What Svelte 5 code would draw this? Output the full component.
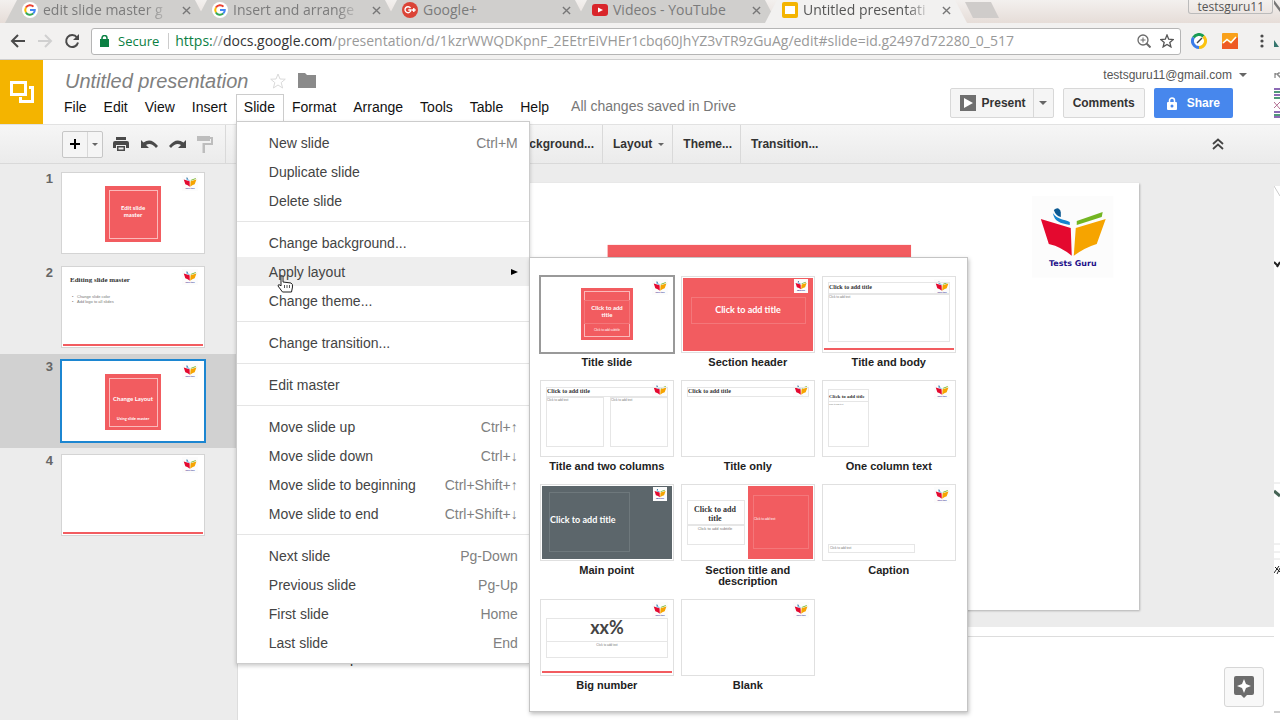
<script lang="ts">
    type Box = { x: number; y: number; w: number; h: number; fill?: string; stroke?: string };
    type Label = { x: number; y: number; size: number; text: string; font?: string; fill?: string; center?: boolean };
    type Preview = { boxes?: Box[]; labels?: Label[]; framed?: boolean };

    const red = '#f25c60';
    const line = '#e6e6e6';
    const faint = '#f4777a';
    const pale = '#fbb9ba';
    const grey = '#777';

    const tabs = [
        { icon: 'google', title: 'edit slide master g', fade: true },
        { icon: 'google', title: 'Insert and arrange', fade: true },
        { icon: 'plus', title: 'Google+', fade: false },
        { icon: 'youtube', title: 'Videos - YouTube', fade: false },
        { icon: 'slides', title: 'Untitled presentati', fade: true },
    ];

    const menus = ['File', 'Edit', 'View', 'Insert', 'Slide', 'Format', 'Arrange', 'Tools', 'Table', 'Help'];

    const slideMenu = [
        [
            { text: 'New slide', keys: 'Ctrl+M' },
            { text: 'Duplicate slide', keys: '' },
            { text: 'Delete slide', keys: '' },
        ],
        [
            { text: 'Change background...', keys: '' },
            { text: 'Apply layout', keys: '' },
            { text: 'Change theme...', keys: '' },
        ],
        [{ text: 'Change transition...', keys: '' }],
        [{ text: 'Edit master', keys: '' }],
        [
            { text: 'Move slide up', keys: 'Ctrl+↑' },
            { text: 'Move slide down', keys: 'Ctrl+↓' },
            { text: 'Move slide to beginning', keys: 'Ctrl+Shift+↑' },
            { text: 'Move slide to end', keys: 'Ctrl+Shift+↓' },
        ],
        [
            { text: 'Next slide', keys: 'Pg-Down' },
            { text: 'Previous slide', keys: 'Pg-Up' },
            { text: 'First slide', keys: 'Home' },
            { text: 'Last slide', keys: 'End' },
        ],
    ];

    const slides: Preview[] = [
        {
            boxes: [
                { x: 43, y: 13, w: 56, h: 56, fill: red },
                { x: 47, y: 17, w: 48, h: 48, stroke: pale },
            ],
            labels: [
                { x: 71, y: 35, size: 6, text: 'Edit slide', fill: '#fff', center: true },
                { x: 71, y: 42, size: 6, text: 'master', fill: '#fff', center: true },
            ],
        },
        {
            boxes: [{ x: 1, y: 77, w: 140, h: 2, fill: red }],
            labels: [
                { x: 8, y: 13, size: 7, text: 'Editing slide master', font: 'serif' },
                { x: 10, y: 30, size: 4, text: '•', font: 'plain', fill: grey },
                { x: 15, y: 30, size: 4, text: 'Change slide color', font: 'plain', fill: grey },
                { x: 10, y: 35, size: 4, text: '•', font: 'plain', fill: grey },
                { x: 15, y: 35, size: 4, text: 'Add logo to all slides', font: 'plain', fill: grey },
            ],
        },
        {
            boxes: [
                { x: 43, y: 13, w: 56, h: 56, fill: red },
                { x: 47, y: 17, w: 48, h: 48, stroke: pale },
            ],
            labels: [
                { x: 71, y: 38, size: 6, text: 'Change Layout', fill: '#fff', center: true },
                { x: 71, y: 58, size: 4, text: 'Using slide master', fill: '#fff', center: true },
            ],
        },
        { boxes: [{ x: 1, y: 77, w: 140, h: 2, fill: red }] },
    ];

    const layouts: (Preview & { name: string })[] = [
        {
            name: 'Title slide',
            boxes: [
                { x: 40, y: 11, w: 52, h: 52, fill: red },
                { x: 43, y: 14, w: 45, h: 45, stroke: pale },
                { x: 43, y: 23, w: 45, h: 23, stroke: faint },
            ],
            labels: [
                { x: 66, y: 31, size: 6, text: 'Click to add', fill: '#fff', center: true },
                { x: 66, y: 38, size: 6, text: 'title', fill: '#fff', center: true },
                { x: 66, y: 53, size: 3, text: 'Click to add subtitle', font: 'plain', fill: '#fff', center: true },
            ],
        },
        {
            name: 'Section header',
            framed: true,
            boxes: [
                { x: 1, y: 1, w: 130, h: 73, fill: red },
                { x: 9, y: 20, w: 114, h: 26, stroke: faint },
            ],
            labels: [{ x: 66, y: 34, size: 9, text: 'Click to add title', fill: '#fff', center: true }],
        },
        {
            name: 'Title and body',
            boxes: [
                { x: 5, y: 5, w: 121, h: 11, stroke: line },
                { x: 5, y: 17, w: 121, h: 47, stroke: line },
                { x: 1, y: 71, w: 130, h: 2, fill: red },
            ],
            labels: [
                { x: 6, y: 11, size: 6, text: 'Click to add title', font: 'serif' },
                { x: 6, y: 20, size: 3, text: 'Click to add text', font: 'plain', fill: grey },
            ],
        },
        {
            name: 'Title and two columns',
            boxes: [
                { x: 5, y: 6, w: 121, h: 9, stroke: line },
                { x: 5, y: 16, w: 57, h: 49, stroke: line },
                { x: 69, y: 16, w: 57, h: 49, stroke: line },
            ],
            labels: [
                { x: 6, y: 11, size: 6, text: 'Click to add title', font: 'serif' },
                { x: 6, y: 19, size: 3, text: 'Click to add text', font: 'plain', fill: grey },
                { x: 70, y: 19, size: 3, text: 'Click to add text', font: 'plain', fill: grey },
            ],
        },
        {
            name: 'Title only',
            boxes: [{ x: 5, y: 6, w: 121, h: 9, stroke: line }],
            labels: [{ x: 6, y: 11, size: 6, text: 'Click to add title', font: 'serif' }],
        },
        {
            name: 'One column text',
            boxes: [
                { x: 5, y: 8, w: 40, h: 12, stroke: line },
                { x: 5, y: 20, w: 40, h: 45, stroke: line },
            ],
            labels: [
                { x: 6, y: 16, size: 5, text: 'Click to add title', font: 'serif' },
                { x: 6, y: 23, size: 2, text: 'Click to add text', font: 'plain', fill: grey },
            ],
        },
        {
            name: 'Main point',
            framed: true,
            boxes: [
                { x: 1, y: 1, w: 130, h: 73, fill: '#5c666b' },
                { x: 8, y: 7, w: 80, h: 59, stroke: '#6e787c' },
            ],
            labels: [{ x: 9, y: 36, size: 9, text: 'Click to add title', fill: '#fff' }],
        },
        {
            name: 'Section title and description',
            boxes: [
                { x: 5, y: 15, w: 57, h: 24, stroke: line },
                { x: 5, y: 40, w: 57, h: 19, stroke: line },
                { x: 66, y: 1, w: 65, h: 73, fill: red },
                { x: 71, y: 10, w: 55, h: 53, stroke: faint },
            ],
            labels: [
                { x: 33, y: 25, size: 8, text: 'Click to add', font: 'serif', center: true },
                { x: 33, y: 34, size: 8, text: 'title', font: 'serif', center: true },
                { x: 33, y: 44, size: 4, text: 'Click to add subtitle', font: 'plain', fill: grey, center: true },
                { x: 72, y: 34, size: 3, text: 'Click to add text', font: 'plain', fill: '#fff' },
            ],
        },
        {
            name: 'Caption',
            boxes: [{ x: 5, y: 59, w: 86, h: 8, stroke: line }],
            labels: [{ x: 7, y: 63, size: 3, text: 'Click to add text', font: 'plain', fill: grey }],
        },
        {
            name: 'Big number',
            boxes: [
                { x: 5, y: 18, w: 121, h: 23, stroke: line },
                { x: 5, y: 41, w: 121, h: 16, stroke: line },
                { x: 1, y: 71, w: 130, h: 2, fill: red },
            ],
            labels: [
                { x: 66, y: 29, size: 18, text: 'xx%', fill: '#444', center: true },
                { x: 66, y: 45, size: 3, text: 'Click to add text', font: 'plain', fill: grey, center: true },
            ],
        },
        { name: 'Blank' },
    ];

    let activeSlide = $state(2);
    let activeLayout = $state(0);
    let address = 'presentation/d/1kzrWWQDKpnF_2EEtrEiVHEr1cbq60JhYZ3vTR9zGuAg/edit#slide=id.g2497d72280_0_517';
</script>

{#snippet logo(x: number, y: number, size: number)}
    <svg {x} {y} width={size} height={size} viewBox="0 0 82 82">
        <rect width="82" height="82" fill="#fcfcfc" />
        <path d="M9 23 39 32 40 60Q30 51 17 48Z" fill="#e4092f" />
        <path d="M74 23 44 32 42 60Q52 52 65 48Z" fill="#f6a400" />
        <path d="M21 17C26 24 32 23 38 26V29C28 27 23 26 21 17Z" fill="#1685cf" />
        <path d="M22 14Q27 10 29 16V21Q24 20 22 14Z" fill="#0d5a92" />
        <path d="M45 25 71 16 70 21 45 29Z" fill="#73b522" />
        <text x="41" y="70" text-anchor="middle" class="logo-text">Tests Guru</text>
    </svg>
{/snippet}

{#snippet preview(item: Preview, width: number, height: number)}
    <svg class="preview" viewBox="0 0 {width} {height}" aria-hidden="true">
        <rect {width} {height} fill="#fff" />
        {#if !item.framed}
            {@render logo(width === 132 ? 111 : 120, 2, 16)}
        {/if}
        {#each item.boxes ?? [] as box}
            {#if box.fill}
                <rect x={box.x} y={box.y} width={box.w} height={box.h} fill={box.fill} />
            {:else}
                <rect x={box.x + 0.5} y={box.y + 0.5} width={box.w} height={box.h} fill="none" stroke={box.stroke} />
            {/if}
        {/each}
        {#if item.framed}
            {@render logo(112, 2, 14)}
        {/if}
        {#each item.labels ?? [] as label}
            <text
                x={label.x}
                y={label.y}
                class={label.font ?? 'sans'}
                font-size={label.size}
                fill={label.fill ?? '#333'}
                text-anchor={label.center ? 'middle' : 'start'}
                dominant-baseline="middle">{label.text}</text>
        {/each}
    </svg>
{/snippet}

{#snippet favicon(name: string)}
    <svg class="favicon" viewBox="0 0 16 16" aria-hidden="true">
        {#if name === 'google'}
            <circle cx="8" cy="8" r="8" fill="#fff" />
            <g fill="none" stroke-width="2">
                <path d="M11.500 4.600A4.800 4.800 0 0 0 3.900 5.600" stroke="#ea4335" />
                <path d="M3.900 5.600A4.800 4.800 0 0 0 3.900 10.400" stroke="#fbbc05" />
                <path d="M3.900 10.400A4.800 4.800 0 0 0 11.200 11.600" stroke="#34a853" />
                <path d="M11.200 11.600A4.800 4.800 0 0 0 12.800 8H8" stroke="#4285f4" />
            </g>
        {:else if name === 'plus'}
            <circle cx="8" cy="8" r="8" fill="#db4437" />
            <path d="M8.500 6A3 3 0 1 0 9 8H6.300M11.800 6V10M9.900 8H13.700" fill="none" stroke="#fff" stroke-width="1.400" />
        {:else if name === 'youtube'}
            <rect y="2" width="16" height="12" rx="3" fill="#d9252a" />
            <path d="M6 5.500 11 8 6 10.500Z" fill="#fff" />
        {:else}
            <rect width="16" height="16" rx="2" fill="#f4b400" />
            <path d="M3 4H13V12H3Z" fill="#fff" />
        {/if}
    </svg>
{/snippet}

<div class="window">
    <div class="tab-strip">
        {#each tabs as tab, i}
            <div class="tab" class:current={i === 4}>
                {@render favicon(tab.icon)}
                <span class="tab-title" class:fade={tab.fade}>{tab.title}</span>
                <button class="close" aria-label="Close tab">
                    <svg width="9" height="9" viewBox="0 0 10 10"><path d="M1 1 9 9M9 1 1 9" stroke="currentColor" stroke-width="1.500" /></svg>
                </button>
            </div>
        {/each}
        <button class="new-tab" aria-label="New tab"></button>
        <span class="profile">testsguru11</span>
    </div>

    <div class="browser-bar">
        <button class="nav" aria-label="Back">
            <svg width="16" height="16" viewBox="0 0 16 16"><path d="M15 8H2M8 2 2 8 8 14" fill="none" stroke="#4a4a4a" stroke-width="2" /></svg>
        </button>
        <button class="nav" aria-label="Forward">
            <svg width="16" height="16" viewBox="0 0 16 16"><path d="M1 8H14M8 2 14 8 8 14" fill="none" stroke="#d0d0d0" stroke-width="2" /></svg>
        </button>
        <button class="nav" aria-label="Reload">
            <svg width="16" height="16" viewBox="0 0 16 16"><path d="M13 4.500A6 6 0 1 0 14 9.500" fill="none" stroke="#4a4a4a" stroke-width="2" /><path d="M15 1V7H9Z" fill="#4a4a4a" /></svg>
        </button>
        <div class="address">
            <svg width="9" height="12" viewBox="0 0 9 12"><rect y="4" width="9" height="8" fill="#0b8043" /><path d="M2 5V3A2.500 2.500 0 0 1 7 3V5" fill="none" stroke="#0b8043" stroke-width="1.500" /></svg>
            <span class="secure">Secure</span>
            <span class="url"><span class="secure">https:</span>//<b>docs.google.com</b>/{address}</span>
            <button aria-label="Zoom">
                <svg width="14" height="14" viewBox="0 0 14 14" fill="none" stroke="#6b6b6b"><circle cx="6" cy="6" r="5" stroke-width="1.300" /><path d="M9.500 9.500 13.500 13.500" stroke-width="2" /><path d="M3.500 6H8.500M6 3.500V8.500" /></svg>
            </button>
            <button aria-label="Bookmark this page">
                <svg width="14" height="14" viewBox="0 0 14 14"><path d="M7 1 8.700 5.200 13.300 5.500 9.800 8.400 10.900 12.900 7 10.400 3.100 12.900 4.200 8.400 .7 5.500 5.300 5.200Z" fill="none" stroke="#555" stroke-width="1.300" /></svg>
            </button>
        </div>
        <div class="extensions">
            <button aria-label="Page speed">
                <svg width="16" height="16" viewBox="0 0 16 16" fill="none" stroke-width="3"><circle cx="8" cy="8" r="5" fill="#fff" stroke="none" /><path d="M2.500 4.500A6.500 6.500 0 0 1 12.500 3.300" stroke="#1a9c55" /><path d="M12.500 3.300A6.500 6.500 0 0 1 8 14.500" stroke="#fbc311" /><path d="M8 14.500A6.500 6.500 0 0 1 2.500 4.500" stroke="#3b7de9" /><path d="M6 10 11 5" stroke="#444" stroke-width="1.500" /></svg>
            </button>
            <button aria-label="Analytics">
                <svg width="16" height="16" viewBox="0 0 16 16"><rect width="16" height="16" rx="1" fill="#f9a11b" /><path d="M0 11 5 8 9 11 15 4 16 5V16H0Z" fill="#ee5a24" /><path d="M1 10 5 6.500 9 9.500 14 4" fill="none" stroke="#fff" stroke-width="1.500" /></svg>
            </button>
        </div>
        <button aria-label="Browser menu">
            <svg width="4" height="14" viewBox="0 0 4 14" fill="#4a4a4a"><circle cx="2" cy="2" r="1.600" /><circle cx="2" cy="7" r="1.600" /><circle cx="2" cy="12" r="1.600" /></svg>
        </button>
    </div>

    <header>
        <a class="home" href="#home" aria-label="Slides home">
            <svg width="26" height="24" viewBox="0 0 26 24" fill="none" stroke="#fff" stroke-width="3"><path d="M2.500 2.500H16.500V14.500H2.500Z" /><path d="M20 7.500H23.500V21.500H11.500V17" /></svg>
        </a>
        <div class="document">
            <div class="title-row">
                <h1>Untitled presentation</h1>
                <button class="title-icon" aria-label="Star">
                    <svg width="16" height="16" viewBox="0 0 16 16"><path d="M8 1 10 6 15.300 6.200 11.200 9.600 12.600 15 8 12 3.400 15 4.800 9.600 .7 6.200 6 6Z" fill="none" stroke="#dadada" /></svg>
                </button>
                <button class="title-icon" aria-label="Move to folder">
                    <svg width="18" height="15" viewBox="0 0 18 15"><path d="M0 0H7L9 2H18V15H0Z" fill="#8a8a8a" /></svg>
                </button>
            </div>
            <nav>
                {#each menus as menu}
                    <div class="menu-holder">
                        <button class="menu" class:open={menu === 'Slide'}>{menu}</button>
                        {#if menu === 'Slide'}
                            <div class="dropdown">
                                {#each slideMenu as group}
                                    <div class="group">
                                        {#each group as item}
                                            <div class="entry">
                                                <button class="item" class:hover={item.text === 'Apply layout'}>
                                                    <span>{item.text}</span>
                                                    {#if item.text === 'Apply layout'}
                                                        <svg width="7" height="8" viewBox="0 0 7 8"><path d="M0 1 7 4 0 7Z" /></svg>
                                                    {:else}
                                                        <span class="keys">{item.keys}</span>
                                                    {/if}
                                                </button>
                                                {#if item.text === 'Apply layout'}
                                                    <svg class="pointer" width="17" height="18" viewBox="0 0 17 18"><path d="M4 1Q6 0 6 2V7L14 8Q16 9 15.500 12L14.500 17H5.500L1 11Q1 9 3 10L4 11Z" fill="#fff" stroke="#222" /><path d="M7.500 10V13M10 10V13M12.500 10V13" stroke="#555" /></svg>
                                                    <div class="layouts">
                                                        {#each layouts as layout, i}
                                                            <button class="layout" class:chosen={i === activeLayout} onclick={() => (activeLayout = i)}>
                                                                <span class="thumb">{@render preview(layout, 132, 75)}</span>
                                                                <span class="layout-name">{layout.name}</span>
                                                            </button>
                                                        {/each}
                                                    </div>
                                                {/if}
                                            </div>
                                        {/each}
                                    </div>
                                {/each}
                            </div>
                        {/if}
                    </div>
                {/each}
                <span class="saved">All changes saved in Drive</span>
            </nav>
        </div>
        <div class="account">
            <button class="email">testsguru11@gmail.com <i class="caret"></i></button>
            <div class="actions">
                <div class="split">
                    <button class="present">
                        <svg width="16" height="16" viewBox="0 0 16 16"><rect width="16" height="16" fill="#6f6f6f" /><path d="M4 3 13 8 4 13Z" fill="#fff" /></svg>
                        Present
                    </button>
                    <button class="more" aria-label="Present options"><i class="caret"></i></button>
                </div>
                <button class="comments">Comments</button>
                <button class="share">
                    <svg width="10" height="13" viewBox="0 0 10 13"><path d="M2.500 5V3.500A2.500 2.500 0 0 1 7.500 3.500V5" fill="none" stroke="#fff" stroke-width="1.500" /><rect y="5" width="10" height="8" rx="1" fill="#fff" /><circle cx="5" cy="9" r="1.500" fill="#4787ed" /></svg>
                    Share
                </button>
            </div>
        </div>
    </header>

    <div class="toolbar">
        <div class="split add">
            <button aria-label="New slide"><svg width="10" height="10" viewBox="0 0 10 10"><path d="M5 0V10M0 5H10" stroke="#000" stroke-width="2" /></svg></button>
            <button class="more" aria-label="New slide with layout"><i class="caret small"></i></button>
        </div>
        <button class="tool" aria-label="Print">
            <svg width="16" height="14" viewBox="0 0 16 14" fill="#4a4a4a"><rect x="3" width="10" height="3" /><path d="M2 4H14Q16 4 16 6V11H13V8H3V11H0V6Q0 4 2 4Z" /><path d="M4 9H12V14H4ZM5.500 10.500V12.500H10.500V10.500Z" fill-rule="evenodd" /></svg>
        </button>
        <button class="tool" aria-label="Undo">
            <svg width="17" height="9" viewBox="0 0 17 9"><path d="M0 0 2.500 2.500Q10-3 17 6L15 8Q10 2 5 5L8 8H0Z" fill="#4a4a4a" /></svg>
        </button>
        <button class="tool" aria-label="Redo">
            <svg width="17" height="9" viewBox="0 0 17 9"><path d="M17 0 14.500 2.500Q7-3 0 6L2 8Q7 2 12 5L9 8H17Z" fill="#4a4a4a" /></svg>
        </button>
        <button class="tool" aria-label="Paint format">
            <svg width="16" height="17" viewBox="0 0 16 17" fill="#bdbdbd"><rect width="13" height="5" /><path d="M13 1H16V9H8V17H5.500V7H14V3H13Z" /></svg>
        </button>
        <div class="covered"></div>
        <button class="command">Background...</button>
        <button class="command">Layout <i class="caret small"></i></button>
        <button class="command">Theme...</button>
        <button class="command">Transition...</button>
        <button class="collapse" aria-label="Hide the menus">
            <svg width="12" height="12" viewBox="0 0 12 12"><path d="M1 6 6 1.500 11 6M1 11 6 6.500 11 11" fill="none" stroke="#444" stroke-width="1.800" /></svg>
        </button>
    </div>

    <main>
        <aside>
            {#each slides as slide, i}
                <button class="slide-row" class:active={i === activeSlide} onclick={() => (activeSlide = i)}>
                    <span class="number">{i + 1}</span>
                    <span class="slide-thumb">{@render preview(slide, 142, 80)}</span>
                </button>
            {/each}
        </aside>
        <div class="editor">
            <div class="canvas">
                <div class="page">
                    <svg class="preview" viewBox="0 0 762 428" aria-hidden="true">
                        <rect x="229" y="62" width="304" height="304" fill={red} />
                        <rect x="250" y="83" width="262" height="262" fill="none" stroke={pale} stroke-width="2" />
                        {@render logo(654, 13, 82)}
                    </svg>
                </div>
            </div>
            <div class="divider"></div>
            <div class="notes">
                <p>Click to add speaker notes</p>
                <button class="explore" aria-label="Explore">
                    <svg width="20" height="22" viewBox="0 0 20 22"><path d="M2 0H18Q20 0 20 2V17Q20 19 18 19H13L10 22 7 19H2Q0 19 0 17V2Q0 0 2 0Z" fill="#6c6c6c" /><path d="M10 3 12 8 17 10 12 12 10 17 8 12 3 10 8 8Z" fill="#fff" /></svg>
                </button>
            </div>
        </div>
    </main>

    <!-- window lying behind, seen past the right edge -->
    <svg class="behind" width="6" height="720" viewBox="0 0 6 720" aria-hidden="true">
        <path d="M0 0 6 8V12L0 4Z" fill="#777" />
        <path d="M0 40 5 47H0Z" fill="#35756d" />
        <path d="M0 61H6V124H0ZM0 186H6V720H0Z" fill="#fff" />
        <path d="M0 186 6 196" stroke="#ccc" />
        <path d="M1 78V73M1 74H4M6 73H4V76H6V78" stroke="#666" fill="none" />
        <path d="M0 89H6M0 95H6M0 112H6M0 117H6" stroke="#8c6bb5" stroke-width="2" />
        <path d="M0 92H6M0 98H6M0 115H6" stroke="#4f9a78" stroke-width="2" />
        <path d="M0 102 6 109M0 108 6 102" stroke="#b36f91" />
        <path d="M0 262 4 266M6 262 3 267" stroke="#222" stroke-width="2" />
        <path d="M0 491 6 496" stroke="#466455" stroke-width="3" />
        <path d="M0 483H6M0 544H6M0 552H6M0 559H6" stroke="#e2e2e2" />
        <path d="M0 573 5 566M1 567 6 572M3 574 6 568" stroke="#222" />
        <path d="M0 712H6" stroke="#ccc" stroke-width="2" />
    </svg>
</div>

<style>
    :global(body) {
        margin: 0;
    }

    .window {
        position: relative;
        display: flex;
        flex-direction: column;
        height: 100vh;
        overflow: hidden;
        background: #fff;
        color: #333;
        font-family: "Liberation Sans", Arial, sans-serif;
        font-size: 14px;
    }

    button {
        display: flex;
        align-items: center;
        justify-content: center;
        margin: 0;
        padding: 0;
        border: none;
        background: none;
        color: inherit;
        font: inherit;
        cursor: pointer;
    }

    svg {
        display: block;
        flex: none;
    }

    /* browser */
    .tab-strip {
        display: flex;
        height: 23px;
        padding-left: 5px;
        box-sizing: border-box;
        background: linear-gradient(#f3f0ee, #e6ddd8);
        font-family: "Open Sans", "Noto Sans", sans-serif;
    }

    .tab {
        display: flex;
        align-items: center;
        width: 202px;
        height: 23px;
        margin-right: -12px;
        padding: 0 12px 3px 17px;
        box-sizing: border-box;
        background: #d0cfcd;
        clip-path: polygon(12px 0, calc(100% - 12px) 0, 100% 100%, 0 100%);
        color: #7b7b7b;
    }

    .tab.current {
        z-index: 1;
        background: #f2f1f0;
        color: #555;
    }

    .favicon {
        width: 16px;
        height: 16px;
        margin-right: 5px;
    }

    .tab-title {
        flex: 1;
        white-space: nowrap;
        font-size: 14px;
        line-height: 20px;
    }

    .tab-title.fade {
        mask-image: linear-gradient(90deg, #000 80%, transparent);
    }

    .close {
        width: 18px;
        margin-left: 5px;
        color: #777;
    }

    .new-tab {
        width: 34px;
        height: 16px;
        margin: 2px 0 0 10px;
        background: #cfccca;
        clip-path: polygon(0 0, 26px 0, 100% 100%, 8px 100%);
    }

    .profile {
        height: 14px;
        margin: 0 7px 0 auto;
        padding: 0 8px;
        border: 1px solid #bbb;
        border-top: none;
        border-radius: 0 0 3px 3px;
        box-sizing: border-box;
        color: #555;
        font-size: 12px;
        line-height: 14px;
    }

    .browser-bar {
        display: flex;
        align-items: center;
        height: 37px;
        padding: 0 16px 0 10px;
        box-sizing: border-box;
        border-bottom: 1px solid #cfcfcf;
        background: #f2f1f0;
        font-family: "Open Sans", "Noto Sans", sans-serif;
    }

    .nav {
        width: 16px;
        margin-right: 11px;
    }

    .address {
        display: flex;
        flex: 1;
        align-items: center;
        gap: 9px;
        height: 27px;
        padding: 0 6px 0 8px;
        box-sizing: border-box;
        border: 1px solid #b5b5b5;
        border-radius: 3px;
        background: #fff;
        color: #999;
        font-size: 13px;
    }

    .address .secure {
        color: #0b8043;
    }

    .url {
        flex: 1;
        padding-left: 6px;
        border-left: 1px solid #ccc;
        font-size: 14px;
        line-height: 16px;
        white-space: nowrap;
    }

    .url b {
        color: #333;
        font-weight: 400;
    }

    .extensions {
        display: flex;
        gap: 15px;
        margin: 0 22px 0 10px;
    }

    /* document header */
    header {
        display: flex;
        height: 64px;
    }

    .home {
        display: flex;
        align-items: center;
        justify-content: center;
        width: 43px;
        background: #f4b400;
    }

    .document {
        flex: 1;
        padding: 7px 0 0 13px;
    }

    .title-row {
        display: flex;
        align-items: center;
        height: 27px;
        padding-left: 9px;
    }

    h1 {
        margin: 0 22px 0 0;
        color: #808080;
        font-size: 20px;
        font-style: italic;
        font-weight: 400;
        line-height: 26px;
    }

    .title-icon {
        margin-right: 12px;
    }

    nav {
        display: flex;
        color: #111;
        line-height: 24px;
    }

    .menu-holder {
        position: relative;
    }

    .menu {
        height: 27px;
        padding: 0 8px 3px 7px;
        border: 1px solid transparent;
        border-bottom: none;
    }

    .menu.open {
        border-color: #ccc;
        background: #fff;
    }

    .saved {
        margin-left: 13px;
        color: #777;
    }

    .dropdown {
        position: absolute;
        top: 100%;
        left: 0;
        z-index: 5;
        width: 292px;
        padding: 6px 0;
        border: 1px solid #ccc;
        background: #fff;
        box-shadow: 0 2px 4px rgba(0, 0, 0, 0.2);
        color: #444;
    }

    .group + .group {
        margin-top: 6px;
        padding-top: 6px;
        border-top: 1px solid #e5e5e5;
    }

    .entry {
        position: relative;
    }

    .item {
        justify-content: space-between;
        width: 100%;
        height: 29px;
        padding: 0 11px 0 32px;
    }

    .item.hover {
        background: #eee;
    }

    .keys {
        color: #808080;
    }

    .pointer {
        position: absolute;
        top: 18px;
        left: 40px;
        z-index: 1;
    }

    .layouts {
        position: absolute;
        top: 0;
        left: 100%;
        display: grid;
        grid-template-columns: repeat(3, 134px);
        align-items: start;
        gap: 12px 7px;
        padding: 18px 11px 20px 10px;
        border: 1px solid #c4c4c4;
        background: #fff;
        box-shadow: 1px 2px 4px rgba(0, 0, 0, 0.25);
        color: #222;
    }

    .layout {
        flex-direction: column;
        align-items: stretch;
    }

    .thumb {
        border: 1px solid #e0e0e0;
    }

    .chosen .thumb {
        border-color: #999;
        outline: 1px solid #999;
    }

    .preview {
        width: 100%;
        height: auto;
    }

    .layout-name {
        margin-top: 4px;
        padding: 0 8px;
        font-size: 11px;
        font-weight: 700;
        line-height: 11px;
    }

    .sans {
        font-family: Lato, sans-serif;
        font-weight: 700;
    }

    .serif {
        font-family: "Liberation Serif", serif;
        font-weight: 700;
    }

    .plain {
        font-family: "Liberation Sans", sans-serif;
    }

    .logo-text {
        fill: #23118a;
        font-family: "DejaVu Sans", sans-serif;
        font-size: 8px;
        font-weight: 700;
    }

    .account {
        display: flex;
        flex-direction: column;
        align-items: flex-end;
        padding: 6px 47px 0 0;
    }

    .email {
        height: 18px;
        margin: 0 -14px 4px 0;
        color: #555;
        font-size: 12px;
    }

    .caret {
        margin-left: 7px;
        border: 4px solid transparent;
        border-top-color: #666;
        border-bottom: none;
    }

    .caret.small {
        margin-left: 6px;
        border-width: 3px;
        border-bottom: none;
    }

    .actions {
        display: flex;
        gap: 9px;
        font-size: 12px;
        font-weight: 700;
    }

    .split {
        display: flex;
        border: 1px solid #d8d8d8;
        border-radius: 2px;
        background: #f5f5f5;
    }

    .present {
        gap: 6px;
        height: 28px;
        padding: 0 7px 0 9px;
    }

    .more {
        width: 20px;
        border-left: 1px solid #d8d8d8;
    }

    .more .caret,
    .more .caret.small {
        margin-left: 0;
    }

    .comments {
        padding: 0 9px;
        border: 1px solid #d8d8d8;
        border-radius: 2px;
        background: #f5f5f5;
    }

    .share {
        gap: 10px;
        padding: 0 13px;
        border-radius: 2px;
        background: #4787ed;
        color: #fff;
    }

    /* toolbar */
    .toolbar {
        display: flex;
        align-items: center;
        height: 40px;
        padding: 0 56px 0 62px;
        border-top: 1px solid #e2e2e2;
        border-bottom: 1px solid #d9d9d9;
        box-sizing: border-box;
        background: linear-gradient(#f6f6f6, #ebebeb);
        font-size: 12px;
        font-weight: 700;
    }

    .add {
        height: 25px;
        margin-right: 4px;
        border-color: #c6c6c6;
    }

    .add button {
        width: 24px;
    }

    .add .more {
        width: 15px;
    }

    .tool {
        width: 28px;
        height: 28px;
    }

    .covered {
        align-self: stretch;
        width: 278px;
        margin-left: 6px;
        border-left: 1px solid #d9d9d9;
    }

    .command {
        align-self: stretch;
        padding: 0 8px 0 10px;
    }

    .command + .command {
        border-left: 1px solid #d9d9d9;
    }

    .collapse {
        margin-left: auto;
    }

    /* workspace */
    main {
        display: flex;
        flex: 1;
        min-height: 0;
    }

    aside {
        width: 237px;
        padding-top: 2px;
        border-right: 1px solid #ddd;
        background: #ececec;
    }

    .slide-row {
        align-items: flex-start;
        justify-content: flex-start;
        width: 100%;
        padding: 6px 0;
    }

    .slide-row.active {
        background: #d1d1d1;
    }

    .number {
        width: 53px;
        margin-right: 8px;
        color: #666;
        font-size: 13px;
        font-weight: 700;
        line-height: 14px;
        text-align: right;
    }

    .slide-thumb {
        width: 142px;
        border: 1px solid #d4d4d4;
    }

    .active .slide-thumb {
        border-color: #1c86d1;
        outline: 1px solid #1c86d1;
    }

    .editor {
        display: flex;
        flex: 1;
        flex-direction: column;
    }

    .canvas {
        display: flex;
        justify-content: center;
        padding: 19px 0 17px;
        background: #ececec;
    }

    .page {
        width: 73%;
        background: #fff;
        box-shadow: 1px 1px 2px rgba(0, 0, 0, 0.25);
    }

    .divider {
        height: 9px;
        border-bottom: 1px solid #ddd;
    }

    .notes {
        display: flex;
        flex: 1;
        align-items: flex-start;
        justify-content: space-between;
        padding: 13px 16px 0 28px;
    }

    .notes p {
        margin: 0;
        color: #333;
        line-height: 16px;
    }

    .explore {
        width: 40px;
        height: 40px;
        margin-top: 17px;
        border: 1px solid #d6d6d6;
        border-radius: 3px;
        background: #f8f8f8;
    }

    .behind {
        position: absolute;
        top: 0;
        right: 0;
        z-index: 1;
    }
</style>
